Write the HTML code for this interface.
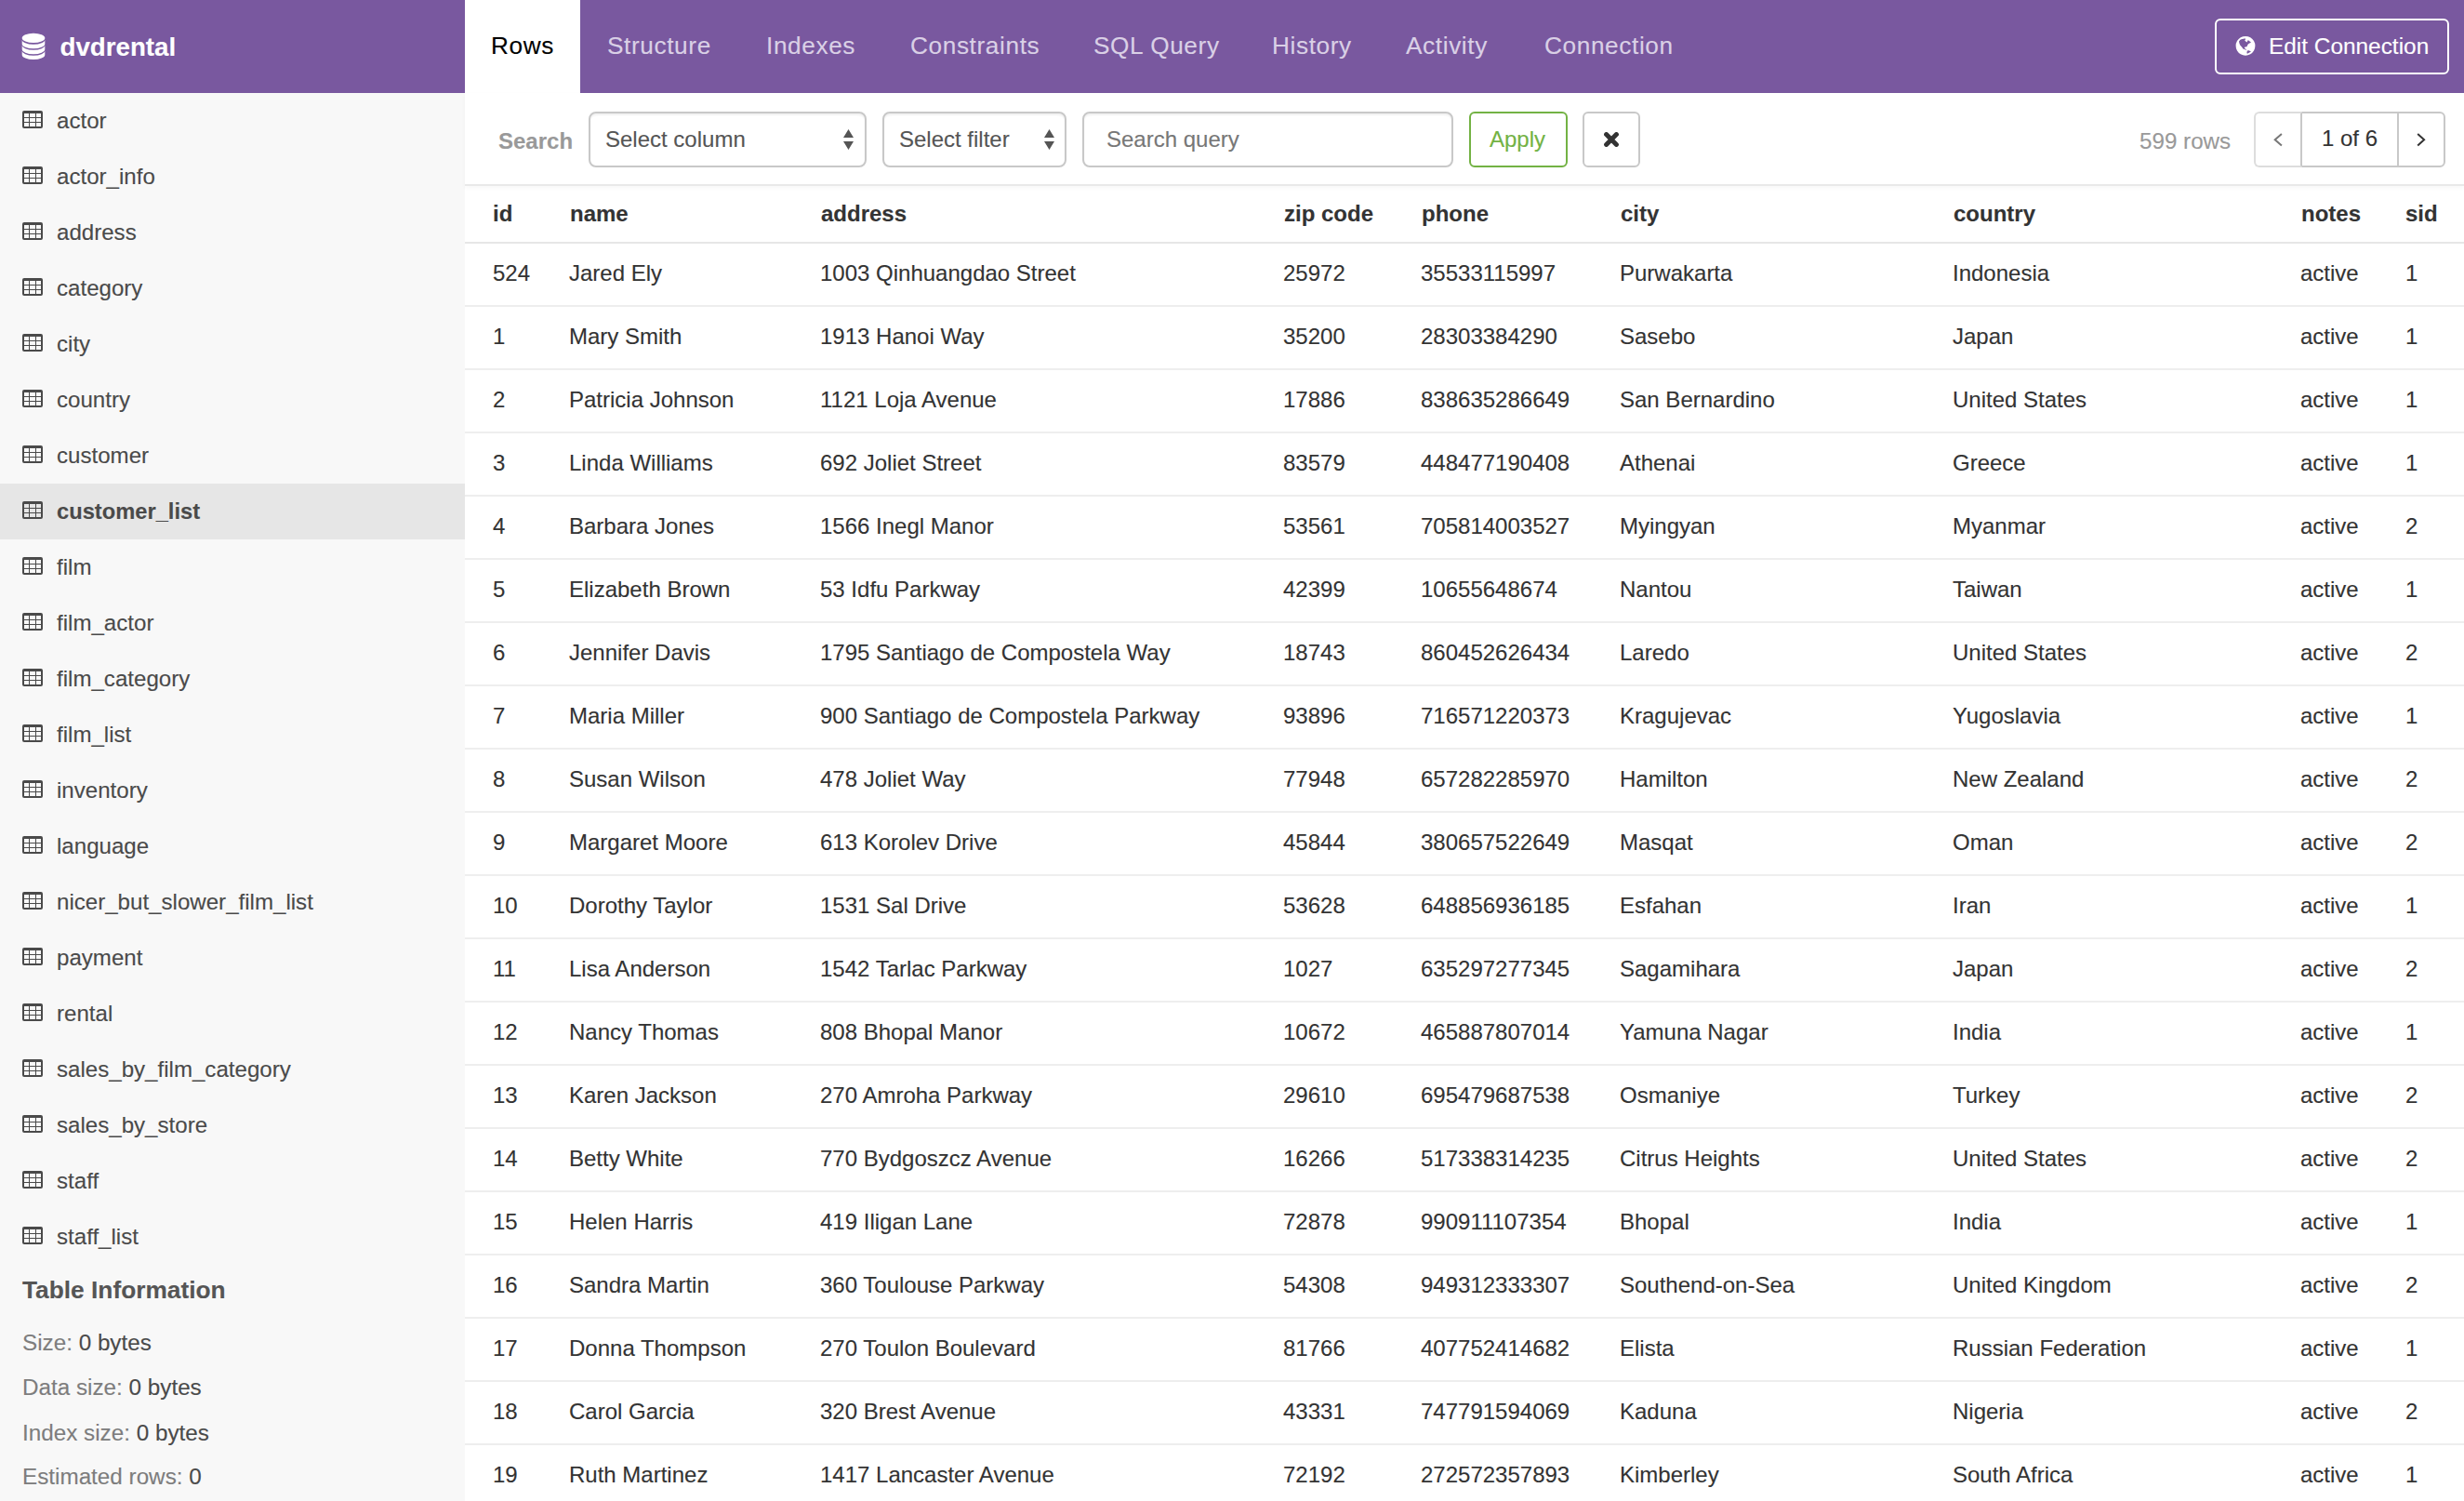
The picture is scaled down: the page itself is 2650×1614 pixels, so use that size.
<!DOCTYPE html><html><head><meta charset="utf-8"><title>pgweb</title><style>
*{box-sizing:border-box}
html,body{margin:0;padding:0}
body{width:2650px;height:1614px;overflow:hidden;position:relative;background:#fff;font-family:"Liberation Sans",sans-serif;color:#333;-webkit-text-stroke:0.12px currentColor}
.abs{position:absolute;white-space:pre}
#nav{position:absolute;left:0;top:0;width:2650px;height:100px;background:#79589f}
#nav .tab{position:absolute;top:0;height:100px}
#nav .tab.sel{background:#fff}
#nav .tl{position:absolute;white-space:pre;font-size:26.2px;line-height:26.2px;letter-spacing:0.62px;color:#dad0e6;top:36.12px}
#nav .tl.sel{color:#000}
#brand{position:absolute;left:64.5px;top:37.15px;font-size:27.7px;line-height:27.7px;font-weight:bold;color:#fff}
#editconn{position:absolute;left:2382px;top:20px;width:252px;height:60px;border:2px solid #fff;border-radius:6px}
#sidebar{position:absolute;left:0;top:100px;width:500px;height:1514px;background:#f8f8f8}
#sidebar .it{position:absolute;left:0;width:500px;height:60px}
#sidebar .it.sel{background:#e6e6e6}
#sidebar .ti{position:absolute;left:24px;top:19px}
#sidebar .nm{position:absolute;left:61px;top:18.00px;font-size:24.1px;line-height:24.1px;color:#4a4a4a;white-space:pre}
#sidebar .it.sel .nm{font-weight:bold;font-size:23.7px;top:18.34px}
#toolbar{position:absolute;left:500px;top:100px;width:2150px;height:100px;background:#fff;border-bottom:2px solid #e9e9e9;box-shadow:0 2px 5px rgba(0,0,0,0.035);z-index:2}
.inp{position:absolute;top:20px;height:60px;border:2px solid #c8c8c8;border-radius:8px;background:#fff;box-shadow:inset 0 2px 2px rgba(0,0,0,0.06)}
#results{position:absolute;left:500px;top:198px;width:2150px;border-collapse:collapse;table-layout:fixed;font-size:24px}
#results th{height:63px;padding:2px 0 0 30px;text-align:left;font-weight:bold;line-height:60px;border-bottom:2px solid #e6e6e6;white-space:nowrap;overflow:hidden;vertical-align:top}
#results td{height:68px;padding:0 0 0 30px;line-height:64px;border-bottom:2px solid #eee;white-space:nowrap;overflow:hidden;vertical-align:top}
</style></head><body>
<div id="nav">
<svg class="abs" style="left:18px;top:30px" width="40" height="40" viewBox="0 0 40 40"><g fill="#fff"><ellipse cx="18" cy="10.9" rx="12.3" ry="5.15"/><path d="M5.7,12.7 A12.3,5.15 0 0 0 30.3,12.7 V17.15 A12.3,5.15 0 0 1 5.7,17.15Z"/><path d="M5.7,18.6 A12.3,5.15 0 0 0 30.3,18.6 V23.05 A12.3,5.15 0 0 1 5.7,23.05Z"/><path d="M5.7,24.5 A12.3,5.15 0 0 0 30.3,24.5 V28.95 A12.3,5.15 0 0 1 5.7,28.95Z"/></g></svg>
<div id="brand">dvdrental</div>
<div class="tab sel" style="left:500px;width:124px"></div>
<div class="tl sel" style="left:528px">Rows</div>
<div class="tl" style="left:653px">Structure</div>
<div class="tl" style="left:824px">Indexes</div>
<div class="tl" style="left:979px">Constraints</div>
<div class="tl" style="left:1176px">SQL Query</div>
<div class="tl" style="left:1368px">History</div>
<div class="tl" style="left:1512px">Activity</div>
<div class="tl" style="left:1661px">Connection</div>
<div id="editconn"></div>
<svg class="abs" style="left:2400px;top:34px" width="30" height="30" viewBox="0 0 30 30"><path fill-rule="evenodd" fill="#fff" d="M15,4.9A10.4,10.4 0 1 1 14.99,4.9Z M8.0,10.4 L9.4,8.8 L11.2,8.0 L13,7.8 L14.4,7.2 L15,8 L14.4,9.4 L14,9.6 L15.6,10.8 L16.6,11.6 L17.4,9.4 L18,9.2 L20,10.8 L21,11.6 L19.8,12.2 L18,13.2 L17.2,14.4 L16.6,16 L15.2,16.4 L14,16.8 L13.8,17.6 L14.8,18.4 L16,19.2 L15.8,19.8 L14.4,19.2 L12.4,18.4 L11.2,16.8 L9.2,14.4 L8.4,12.4Z M16.8,20.6 L18.6,20.2 L21,21.4 L19.2,22.6 L17,23.8 L16.4,23Z"/></svg>
<div class="abs" style="left:2440px;top:37.55px;font-size:24.4px;line-height:24.4px;color:#fff">Edit Connection</div>
</div>
<div id="sidebar">
<div class="it" style="top:0px"><svg class="ti" width="22" height="19" viewBox="0 0 22 19"><path fill-rule="evenodd" fill="#4a4a4a" d="M2,0H20A2,2 0 0 1 22,2V17A2,2 0 0 1 20,19H2A2,2 0 0 1 0,17V2A2,2 0 0 1 2,0Z M2,3H7V7H2Z M8,3H14V7H8Z M15,3H20V7H15Z M2,8H7V12H2Z M8,8H14V12H8Z M15,8H20V12H15Z M2,13H7V17H2Z M8,13H14V17H8Z M15,13H20V17H15Z"/></svg><div class="nm">actor</div></div>
<div class="it" style="top:60px"><svg class="ti" width="22" height="19" viewBox="0 0 22 19"><path fill-rule="evenodd" fill="#4a4a4a" d="M2,0H20A2,2 0 0 1 22,2V17A2,2 0 0 1 20,19H2A2,2 0 0 1 0,17V2A2,2 0 0 1 2,0Z M2,3H7V7H2Z M8,3H14V7H8Z M15,3H20V7H15Z M2,8H7V12H2Z M8,8H14V12H8Z M15,8H20V12H15Z M2,13H7V17H2Z M8,13H14V17H8Z M15,13H20V17H15Z"/></svg><div class="nm">actor_info</div></div>
<div class="it" style="top:120px"><svg class="ti" width="22" height="19" viewBox="0 0 22 19"><path fill-rule="evenodd" fill="#4a4a4a" d="M2,0H20A2,2 0 0 1 22,2V17A2,2 0 0 1 20,19H2A2,2 0 0 1 0,17V2A2,2 0 0 1 2,0Z M2,3H7V7H2Z M8,3H14V7H8Z M15,3H20V7H15Z M2,8H7V12H2Z M8,8H14V12H8Z M15,8H20V12H15Z M2,13H7V17H2Z M8,13H14V17H8Z M15,13H20V17H15Z"/></svg><div class="nm">address</div></div>
<div class="it" style="top:180px"><svg class="ti" width="22" height="19" viewBox="0 0 22 19"><path fill-rule="evenodd" fill="#4a4a4a" d="M2,0H20A2,2 0 0 1 22,2V17A2,2 0 0 1 20,19H2A2,2 0 0 1 0,17V2A2,2 0 0 1 2,0Z M2,3H7V7H2Z M8,3H14V7H8Z M15,3H20V7H15Z M2,8H7V12H2Z M8,8H14V12H8Z M15,8H20V12H15Z M2,13H7V17H2Z M8,13H14V17H8Z M15,13H20V17H15Z"/></svg><div class="nm">category</div></div>
<div class="it" style="top:240px"><svg class="ti" width="22" height="19" viewBox="0 0 22 19"><path fill-rule="evenodd" fill="#4a4a4a" d="M2,0H20A2,2 0 0 1 22,2V17A2,2 0 0 1 20,19H2A2,2 0 0 1 0,17V2A2,2 0 0 1 2,0Z M2,3H7V7H2Z M8,3H14V7H8Z M15,3H20V7H15Z M2,8H7V12H2Z M8,8H14V12H8Z M15,8H20V12H15Z M2,13H7V17H2Z M8,13H14V17H8Z M15,13H20V17H15Z"/></svg><div class="nm">city</div></div>
<div class="it" style="top:300px"><svg class="ti" width="22" height="19" viewBox="0 0 22 19"><path fill-rule="evenodd" fill="#4a4a4a" d="M2,0H20A2,2 0 0 1 22,2V17A2,2 0 0 1 20,19H2A2,2 0 0 1 0,17V2A2,2 0 0 1 2,0Z M2,3H7V7H2Z M8,3H14V7H8Z M15,3H20V7H15Z M2,8H7V12H2Z M8,8H14V12H8Z M15,8H20V12H15Z M2,13H7V17H2Z M8,13H14V17H8Z M15,13H20V17H15Z"/></svg><div class="nm">country</div></div>
<div class="it" style="top:360px"><svg class="ti" width="22" height="19" viewBox="0 0 22 19"><path fill-rule="evenodd" fill="#4a4a4a" d="M2,0H20A2,2 0 0 1 22,2V17A2,2 0 0 1 20,19H2A2,2 0 0 1 0,17V2A2,2 0 0 1 2,0Z M2,3H7V7H2Z M8,3H14V7H8Z M15,3H20V7H15Z M2,8H7V12H2Z M8,8H14V12H8Z M15,8H20V12H15Z M2,13H7V17H2Z M8,13H14V17H8Z M15,13H20V17H15Z"/></svg><div class="nm">customer</div></div>
<div class="it sel" style="top:420px"><svg class="ti" width="22" height="19" viewBox="0 0 22 19"><path fill-rule="evenodd" fill="#4a4a4a" d="M2,0H20A2,2 0 0 1 22,2V17A2,2 0 0 1 20,19H2A2,2 0 0 1 0,17V2A2,2 0 0 1 2,0Z M2,3H7V7H2Z M8,3H14V7H8Z M15,3H20V7H15Z M2,8H7V12H2Z M8,8H14V12H8Z M15,8H20V12H15Z M2,13H7V17H2Z M8,13H14V17H8Z M15,13H20V17H15Z"/></svg><div class="nm">customer_list</div></div>
<div class="it" style="top:480px"><svg class="ti" width="22" height="19" viewBox="0 0 22 19"><path fill-rule="evenodd" fill="#4a4a4a" d="M2,0H20A2,2 0 0 1 22,2V17A2,2 0 0 1 20,19H2A2,2 0 0 1 0,17V2A2,2 0 0 1 2,0Z M2,3H7V7H2Z M8,3H14V7H8Z M15,3H20V7H15Z M2,8H7V12H2Z M8,8H14V12H8Z M15,8H20V12H15Z M2,13H7V17H2Z M8,13H14V17H8Z M15,13H20V17H15Z"/></svg><div class="nm">film</div></div>
<div class="it" style="top:540px"><svg class="ti" width="22" height="19" viewBox="0 0 22 19"><path fill-rule="evenodd" fill="#4a4a4a" d="M2,0H20A2,2 0 0 1 22,2V17A2,2 0 0 1 20,19H2A2,2 0 0 1 0,17V2A2,2 0 0 1 2,0Z M2,3H7V7H2Z M8,3H14V7H8Z M15,3H20V7H15Z M2,8H7V12H2Z M8,8H14V12H8Z M15,8H20V12H15Z M2,13H7V17H2Z M8,13H14V17H8Z M15,13H20V17H15Z"/></svg><div class="nm">film_actor</div></div>
<div class="it" style="top:600px"><svg class="ti" width="22" height="19" viewBox="0 0 22 19"><path fill-rule="evenodd" fill="#4a4a4a" d="M2,0H20A2,2 0 0 1 22,2V17A2,2 0 0 1 20,19H2A2,2 0 0 1 0,17V2A2,2 0 0 1 2,0Z M2,3H7V7H2Z M8,3H14V7H8Z M15,3H20V7H15Z M2,8H7V12H2Z M8,8H14V12H8Z M15,8H20V12H15Z M2,13H7V17H2Z M8,13H14V17H8Z M15,13H20V17H15Z"/></svg><div class="nm">film_category</div></div>
<div class="it" style="top:660px"><svg class="ti" width="22" height="19" viewBox="0 0 22 19"><path fill-rule="evenodd" fill="#4a4a4a" d="M2,0H20A2,2 0 0 1 22,2V17A2,2 0 0 1 20,19H2A2,2 0 0 1 0,17V2A2,2 0 0 1 2,0Z M2,3H7V7H2Z M8,3H14V7H8Z M15,3H20V7H15Z M2,8H7V12H2Z M8,8H14V12H8Z M15,8H20V12H15Z M2,13H7V17H2Z M8,13H14V17H8Z M15,13H20V17H15Z"/></svg><div class="nm">film_list</div></div>
<div class="it" style="top:720px"><svg class="ti" width="22" height="19" viewBox="0 0 22 19"><path fill-rule="evenodd" fill="#4a4a4a" d="M2,0H20A2,2 0 0 1 22,2V17A2,2 0 0 1 20,19H2A2,2 0 0 1 0,17V2A2,2 0 0 1 2,0Z M2,3H7V7H2Z M8,3H14V7H8Z M15,3H20V7H15Z M2,8H7V12H2Z M8,8H14V12H8Z M15,8H20V12H15Z M2,13H7V17H2Z M8,13H14V17H8Z M15,13H20V17H15Z"/></svg><div class="nm">inventory</div></div>
<div class="it" style="top:780px"><svg class="ti" width="22" height="19" viewBox="0 0 22 19"><path fill-rule="evenodd" fill="#4a4a4a" d="M2,0H20A2,2 0 0 1 22,2V17A2,2 0 0 1 20,19H2A2,2 0 0 1 0,17V2A2,2 0 0 1 2,0Z M2,3H7V7H2Z M8,3H14V7H8Z M15,3H20V7H15Z M2,8H7V12H2Z M8,8H14V12H8Z M15,8H20V12H15Z M2,13H7V17H2Z M8,13H14V17H8Z M15,13H20V17H15Z"/></svg><div class="nm">language</div></div>
<div class="it" style="top:840px"><svg class="ti" width="22" height="19" viewBox="0 0 22 19"><path fill-rule="evenodd" fill="#4a4a4a" d="M2,0H20A2,2 0 0 1 22,2V17A2,2 0 0 1 20,19H2A2,2 0 0 1 0,17V2A2,2 0 0 1 2,0Z M2,3H7V7H2Z M8,3H14V7H8Z M15,3H20V7H15Z M2,8H7V12H2Z M8,8H14V12H8Z M15,8H20V12H15Z M2,13H7V17H2Z M8,13H14V17H8Z M15,13H20V17H15Z"/></svg><div class="nm">nicer_but_slower_film_list</div></div>
<div class="it" style="top:900px"><svg class="ti" width="22" height="19" viewBox="0 0 22 19"><path fill-rule="evenodd" fill="#4a4a4a" d="M2,0H20A2,2 0 0 1 22,2V17A2,2 0 0 1 20,19H2A2,2 0 0 1 0,17V2A2,2 0 0 1 2,0Z M2,3H7V7H2Z M8,3H14V7H8Z M15,3H20V7H15Z M2,8H7V12H2Z M8,8H14V12H8Z M15,8H20V12H15Z M2,13H7V17H2Z M8,13H14V17H8Z M15,13H20V17H15Z"/></svg><div class="nm">payment</div></div>
<div class="it" style="top:960px"><svg class="ti" width="22" height="19" viewBox="0 0 22 19"><path fill-rule="evenodd" fill="#4a4a4a" d="M2,0H20A2,2 0 0 1 22,2V17A2,2 0 0 1 20,19H2A2,2 0 0 1 0,17V2A2,2 0 0 1 2,0Z M2,3H7V7H2Z M8,3H14V7H8Z M15,3H20V7H15Z M2,8H7V12H2Z M8,8H14V12H8Z M15,8H20V12H15Z M2,13H7V17H2Z M8,13H14V17H8Z M15,13H20V17H15Z"/></svg><div class="nm">rental</div></div>
<div class="it" style="top:1020px"><svg class="ti" width="22" height="19" viewBox="0 0 22 19"><path fill-rule="evenodd" fill="#4a4a4a" d="M2,0H20A2,2 0 0 1 22,2V17A2,2 0 0 1 20,19H2A2,2 0 0 1 0,17V2A2,2 0 0 1 2,0Z M2,3H7V7H2Z M8,3H14V7H8Z M15,3H20V7H15Z M2,8H7V12H2Z M8,8H14V12H8Z M15,8H20V12H15Z M2,13H7V17H2Z M8,13H14V17H8Z M15,13H20V17H15Z"/></svg><div class="nm">sales_by_film_category</div></div>
<div class="it" style="top:1080px"><svg class="ti" width="22" height="19" viewBox="0 0 22 19"><path fill-rule="evenodd" fill="#4a4a4a" d="M2,0H20A2,2 0 0 1 22,2V17A2,2 0 0 1 20,19H2A2,2 0 0 1 0,17V2A2,2 0 0 1 2,0Z M2,3H7V7H2Z M8,3H14V7H8Z M15,3H20V7H15Z M2,8H7V12H2Z M8,8H14V12H8Z M15,8H20V12H15Z M2,13H7V17H2Z M8,13H14V17H8Z M15,13H20V17H15Z"/></svg><div class="nm">sales_by_store</div></div>
<div class="it" style="top:1140px"><svg class="ti" width="22" height="19" viewBox="0 0 22 19"><path fill-rule="evenodd" fill="#4a4a4a" d="M2,0H20A2,2 0 0 1 22,2V17A2,2 0 0 1 20,19H2A2,2 0 0 1 0,17V2A2,2 0 0 1 2,0Z M2,3H7V7H2Z M8,3H14V7H8Z M15,3H20V7H15Z M2,8H7V12H2Z M8,8H14V12H8Z M15,8H20V12H15Z M2,13H7V17H2Z M8,13H14V17H8Z M15,13H20V17H15Z"/></svg><div class="nm">staff</div></div>
<div class="it" style="top:1200px"><svg class="ti" width="22" height="19" viewBox="0 0 22 19"><path fill-rule="evenodd" fill="#4a4a4a" d="M2,0H20A2,2 0 0 1 22,2V17A2,2 0 0 1 20,19H2A2,2 0 0 1 0,17V2A2,2 0 0 1 2,0Z M2,3H7V7H2Z M8,3H14V7H8Z M15,3H20V7H15Z M2,8H7V12H2Z M8,8H14V12H8Z M15,8H20V12H15Z M2,13H7V17H2Z M8,13H14V17H8Z M15,13H20V17H15Z"/></svg><div class="nm">staff_list</div></div>
<div class="abs" style="left:24px;top:1274.24px;font-size:26.3px;line-height:26.3px;font-weight:bold;color:#555">Table Information</div>
<div class="abs" style="left:24px;top:1332.27px;font-size:24.25px;line-height:24.25px;color:#7d7d7d">Size: <span style="color:#4a4a4a">0 bytes</span></div>
<div class="abs" style="left:24px;top:1380.27px;font-size:24.25px;line-height:24.25px;color:#7d7d7d">Data size: <span style="color:#4a4a4a">0 bytes</span></div>
<div class="abs" style="left:24px;top:1428.67px;font-size:24.25px;line-height:24.25px;color:#7d7d7d">Index size: <span style="color:#4a4a4a">0 bytes</span></div>
<div class="abs" style="left:24px;top:1476.27px;font-size:24.25px;line-height:24.25px;color:#7d7d7d">Estimated rows: <span style="color:#4a4a4a">0</span></div>
</div>
<div id="toolbar">
<div class="abs" style="left:36px;top:39.88px;font-size:24px;line-height:24px;font-weight:bold;color:#999">Search</div>
<div class="inp" style="left:133px;width:299px"></div>
<div class="abs" style="left:151px;top:38.48px;font-size:24px;line-height:24px;color:#555">Select column</div>
<svg class="abs" style="left:407px;top:39px" width="11" height="22" viewBox="0 0 11 22"><path fill="#555" d="M5.5,0L11,9H0Z M0,13H11L5.5,22Z"/></svg>
<div class="inp" style="left:449px;width:198px"></div>
<div class="abs" style="left:467px;top:38.48px;font-size:24px;line-height:24px;color:#555">Select filter</div>
<svg class="abs" style="left:623px;top:39px" width="11" height="22" viewBox="0 0 11 22"><path fill="#555" d="M5.5,0L11,9H0Z M0,13H11L5.5,22Z"/></svg>
<div class="inp" style="left:664px;width:399px"></div>
<div class="abs" style="left:690px;top:38.48px;font-size:24px;line-height:24px;color:#777">Search query</div>
<div class="inp" style="left:1080px;width:106px;border-color:#73b244;box-shadow:none;border-radius:6px"></div>
<div class="abs" style="left:1102px;top:38.48px;font-size:24px;line-height:24px;color:#73b244">Apply</div>
<div class="inp" style="left:1202px;width:62px;box-shadow:none;border-radius:6px"></div>
<svg class="abs" style="left:1225px;top:42px" width="16" height="16" viewBox="0 0 16 16"><path stroke="#333" stroke-width="5" stroke-linecap="round" d="M2.6,2.6L13.4,13.4M13.4,2.6L2.6,13.4"/></svg>
<div class="abs" style="left:1801px;top:39.51px;font-size:24.2px;line-height:24.2px;color:#999">599 rows</div>
<div class="abs" style="left:1924px;top:20px;width:52px;height:60px;border:2px solid #ddd;border-right-color:#c8c8c8;border-radius:6px 0 0 6px;box-sizing:border-box"></div>
<div class="abs" style="left:1976px;top:20px;width:102px;height:60px;border-top:2px solid #c8c8c8;border-bottom:2px solid #c8c8c8;box-sizing:border-box"></div>
<div class="abs" style="left:2078px;top:20px;width:52px;height:60px;border:2px solid #c8c8c8;border-radius:0 6px 6px 0;box-sizing:border-box"></div>
<svg class="abs" style="left:1944px;top:42px" width="12" height="16" viewBox="0 0 12 16"><path fill="none" stroke="#777" stroke-width="2" d="M9.9,2.1L2.7,8.2L9.9,14.4"/></svg>
<svg class="abs" style="left:2098px;top:42px" width="12" height="16" viewBox="0 0 12 16"><path fill="none" stroke="#333" stroke-width="2" d="M2.2,2.1L9.1,8.2L2.2,14.4"/></svg>
<div class="abs" style="left:1997px;top:37.28px;font-size:24px;line-height:24px;color:#333">1 of 6</div>
</div>
<table id="results"><colgroup><col style="width:82px"><col style="width:270px"><col style="width:498px"><col style="width:148px"><col style="width:214px"><col style="width:358px"><col style="width:374px"><col style="width:113px"><col style="width:93px"></colgroup><thead><tr>
<th>id</th>
<th style="padding-left:31px">name</th>
<th style="padding-left:31px">address</th>
<th style="padding-left:31px">zip code</th>
<th style="padding-left:31px">phone</th>
<th style="padding-left:31px">city</th>
<th style="padding-left:31px">country</th>
<th style="padding-left:31px">notes</th>
<th>sid</th>
</tr></thead><tbody>
<tr><td>524</td><td>Jared Ely</td><td>1003 Qinhuangdao Street</td><td>25972</td><td>35533115997</td><td>Purwakarta</td><td>Indonesia</td><td>active</td><td>1</td></tr>
<tr><td>1</td><td>Mary Smith</td><td>1913 Hanoi Way</td><td>35200</td><td>28303384290</td><td>Sasebo</td><td>Japan</td><td>active</td><td>1</td></tr>
<tr><td>2</td><td>Patricia Johnson</td><td>1121 Loja Avenue</td><td>17886</td><td>838635286649</td><td>San Bernardino</td><td>United States</td><td>active</td><td>1</td></tr>
<tr><td>3</td><td>Linda Williams</td><td>692 Joliet Street</td><td>83579</td><td>448477190408</td><td>Athenai</td><td>Greece</td><td>active</td><td>1</td></tr>
<tr><td>4</td><td>Barbara Jones</td><td>1566 Inegl Manor</td><td>53561</td><td>705814003527</td><td>Myingyan</td><td>Myanmar</td><td>active</td><td>2</td></tr>
<tr><td>5</td><td>Elizabeth Brown</td><td>53 Idfu Parkway</td><td>42399</td><td>10655648674</td><td>Nantou</td><td>Taiwan</td><td>active</td><td>1</td></tr>
<tr><td>6</td><td>Jennifer Davis</td><td>1795 Santiago de Compostela Way</td><td>18743</td><td>860452626434</td><td>Laredo</td><td>United States</td><td>active</td><td>2</td></tr>
<tr><td>7</td><td>Maria Miller</td><td>900 Santiago de Compostela Parkway</td><td>93896</td><td>716571220373</td><td>Kragujevac</td><td>Yugoslavia</td><td>active</td><td>1</td></tr>
<tr><td>8</td><td>Susan Wilson</td><td>478 Joliet Way</td><td>77948</td><td>657282285970</td><td>Hamilton</td><td>New Zealand</td><td>active</td><td>2</td></tr>
<tr><td>9</td><td>Margaret Moore</td><td>613 Korolev Drive</td><td>45844</td><td>380657522649</td><td>Masqat</td><td>Oman</td><td>active</td><td>2</td></tr>
<tr><td>10</td><td>Dorothy Taylor</td><td>1531 Sal Drive</td><td>53628</td><td>648856936185</td><td>Esfahan</td><td>Iran</td><td>active</td><td>1</td></tr>
<tr><td>11</td><td>Lisa Anderson</td><td>1542 Tarlac Parkway</td><td>1027</td><td>635297277345</td><td>Sagamihara</td><td>Japan</td><td>active</td><td>2</td></tr>
<tr><td>12</td><td>Nancy Thomas</td><td>808 Bhopal Manor</td><td>10672</td><td>465887807014</td><td>Yamuna Nagar</td><td>India</td><td>active</td><td>1</td></tr>
<tr><td>13</td><td>Karen Jackson</td><td>270 Amroha Parkway</td><td>29610</td><td>695479687538</td><td>Osmaniye</td><td>Turkey</td><td>active</td><td>2</td></tr>
<tr><td>14</td><td>Betty White</td><td>770 Bydgoszcz Avenue</td><td>16266</td><td>517338314235</td><td>Citrus Heights</td><td>United States</td><td>active</td><td>2</td></tr>
<tr><td>15</td><td>Helen Harris</td><td>419 Iligan Lane</td><td>72878</td><td>990911107354</td><td>Bhopal</td><td>India</td><td>active</td><td>1</td></tr>
<tr><td>16</td><td>Sandra Martin</td><td>360 Toulouse Parkway</td><td>54308</td><td>949312333307</td><td>Southend-on-Sea</td><td>United Kingdom</td><td>active</td><td>2</td></tr>
<tr><td>17</td><td>Donna Thompson</td><td>270 Toulon Boulevard</td><td>81766</td><td>407752414682</td><td>Elista</td><td>Russian Federation</td><td>active</td><td>1</td></tr>
<tr><td>18</td><td>Carol Garcia</td><td>320 Brest Avenue</td><td>43331</td><td>747791594069</td><td>Kaduna</td><td>Nigeria</td><td>active</td><td>2</td></tr>
<tr><td>19</td><td>Ruth Martinez</td><td>1417 Lancaster Avenue</td><td>72192</td><td>272572357893</td><td>Kimberley</td><td>South Africa</td><td>active</td><td>1</td></tr>
</tbody></table>
</body></html>
